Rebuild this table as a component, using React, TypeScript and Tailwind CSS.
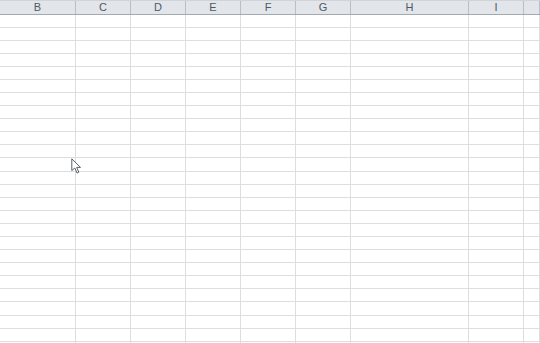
const columns = [
	{ name: 'B', width: 'w-[76px]' },
	{ name: 'C', width: 'w-[55px]' },
	{ name: 'D', width: 'w-[55px]' },
	{ name: 'E', width: 'w-[55px]' },
	{ name: 'F', width: 'w-[55px]' },
	{ name: 'G', width: 'w-[55px]' },
	{ name: 'H', width: 'w-[118px]' },
	{ name: 'I', width: 'w-[55px]' },
	{ name: 'J', width: 'flex-1' },
]

const rows = Array.from({ length: 26 }, (_, i) => i)

function Cursor() {
	return (
		<svg
			className="absolute left-[71px] top-[158px]"
			width="12"
			height="17"
			viewBox="0 0 12 17"
		>
			<path
				d="M0.8 0.8 L0.8 12.5 L3.8 10 L6 15 L7.8 14.2 L5.7 9.4 L9.5 9.4 Z"
				fill="#ffffff"
				stroke="#5b5f66"
				strokeWidth="1"
				strokeLinejoin="round"
			/>
		</svg>
	)
}

export default function App() {
	return (
		<div className="relative w-[540px] h-[343px] overflow-hidden bg-white font-['Liberation_Sans',Arial,sans-serif]">
			{/* column headers */}
			<div className="flex h-[15px] border-t border-b border-t-[#d0d3d8] border-b-[#a4a9b0] bg-[#e2e5ea]">
				{columns.map((col) => (
					<div
						key={col.name}
						className={`${col.width} shrink-0 flex items-center justify-center border-r border-[#b9bec5] text-[11px] leading-none text-[#4f5866]`}
					>
						{col.name !== 'J' && col.name}
					</div>
				))}
			</div>
			{/* cells */}
			{rows.map((r) => (
				<div
					key={r}
					className={`flex border-b border-[#dedede] ${r === 0 ? 'h-[12.5px]' : 'h-[13.1px]'}`}
				>
					{columns.map((col) => (
						<div
							key={col.name}
							className={`${col.width} shrink-0 border-r border-[#dedede]`}
						/>
					))}
				</div>
			))}
			<Cursor />
		</div>
	)
}
